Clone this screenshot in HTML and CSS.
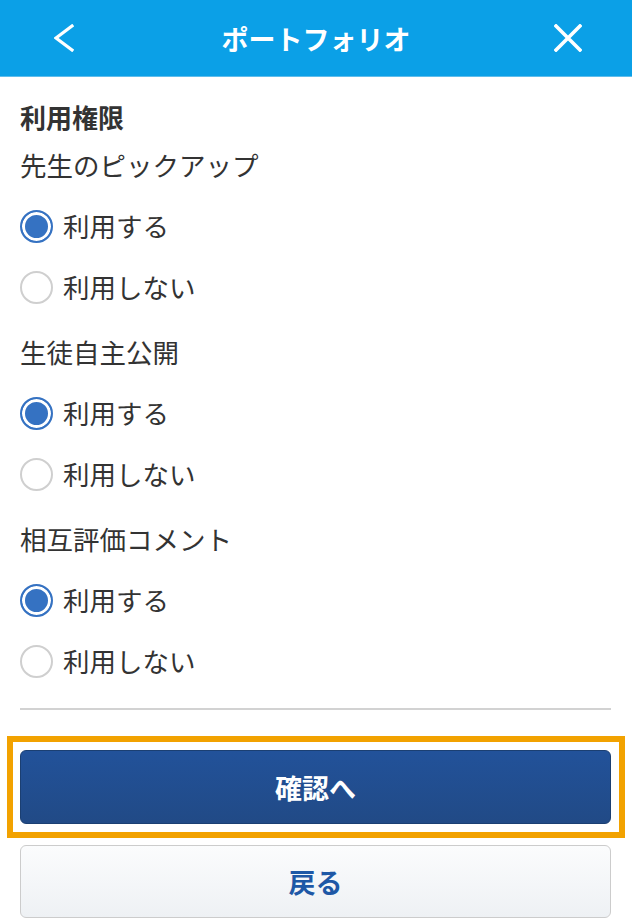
FILE: index.html
```html
<!DOCTYPE html>
<html lang="ja">
<head>
<meta charset="utf-8">
<title>ポートフォリオ</title>
<link rel="stylesheet" href="styles.css">
</head>
<body>
<header class="topbar">
  <span class="topbar-back">
    <svg width="20" height="28" viewBox="0 0 20 28"><polyline points="18,2 2,14 18,26" fill="none" stroke="#fff" stroke-width="3.2" stroke-linecap="square" stroke-linejoin="miter"/></svg>
  </span>
  <h1 class="topbar-title">ポートフォリオ</h1>
  <span class="topbar-close">
    <svg width="28" height="28" viewBox="0 0 28 28"><path d="M2 2 L26 26 M26 2 L2 26" fill="none" stroke="#fff" stroke-width="3.6" stroke-linecap="square"/></svg>
  </span>
</header>
<main class="content">
  <h2 class="section-title">利用権限</h2>

  <div class="group">
    <div class="group-label">先生のピックアップ</div>
    <label class="radio-row"><span class="radio checked"></span><span class="radio-text">利用する</span></label>
    <label class="radio-row"><span class="radio"></span><span class="radio-text">利用しない</span></label>
  </div>

  <div class="group">
    <div class="group-label">生徒自主公開</div>
    <label class="radio-row"><span class="radio checked"></span><span class="radio-text">利用する</span></label>
    <label class="radio-row"><span class="radio"></span><span class="radio-text">利用しない</span></label>
  </div>

  <div class="group">
    <div class="group-label">相互評価コメント</div>
    <label class="radio-row"><span class="radio checked"></span><span class="radio-text">利用する</span></label>
    <label class="radio-row"><span class="radio"></span><span class="radio-text">利用しない</span></label>
  </div>

  <hr class="divider">

  <div class="actions">
    <div class="highlight">
      <button class="btn btn-primary">確認へ</button>
    </div>
    <button class="btn btn-secondary">戻る</button>
  </div>
</main>
</body>
</html>
```

FILE: styles.css
```css
* { box-sizing: border-box; }
html, body {
  margin: 0;
  padding: 0;
  background: #ffffff;
}
body {
  font-family: "Noto Sans CJK JP", "Noto Sans", sans-serif;
  color: #333333;
  width: 632px;
}
.topbar {
  height: 77px;
  background: #0ba0e7;
  display: grid;
  grid-template-columns: 1fr auto 1fr;
  align-items: center;
  border-bottom: 1px solid #5fbdec;
}
.topbar-back {
  justify-self: start;
  margin-left: 54px;
  display: flex;
}
.topbar-close {
  justify-self: end;
  margin-right: 50px;
  display: flex;
}
.topbar-title {
  margin: 0;
  color: #ffffff;
  font-size: 27px;
  font-weight: 700;
  line-height: 1;
}
.content {
  padding: 16px 21px 0 20px;
}
.section-title {
  margin: 0;
  font-size: 26px;
  font-weight: 700;
  line-height: 48px;
  color: #333333;
}
.group {
  margin-bottom: 10px;
}
.group-label {
  font-size: 26.5px;
  line-height: 48px;
  margin-bottom: 7px;
  color: #333333;
}
.radio-row {
  display: flex;
  align-items: center;
  height: 61px;
  gap: 10px;
}
.radio {
  width: 33px;
  height: 33px;
  border-radius: 50%;
  border: 2px solid #cfcfcf;
  background: #ffffff;
  flex: none;
}
.radio.checked {
  border-color: #3572c2;
  background: #3572c2;
  box-shadow: inset 0 0 0 3px #ffffff;
}
.radio-text {
  font-size: 26.5px;
  line-height: 1;
  color: #333333;
}
.divider {
  margin: 16px 0 0 0;
  border: none;
  height: 2px;
  background: #d2d2d2;
}
.actions {
  display: flex;
  flex-direction: column;
  gap: 7px;
  padding-top: 26px;
}
.highlight {
  border: 6px solid #f2a200;
  padding: 8px 8px 8px 7px;
  margin: 0 -14px 0 -13px;
}
.btn {
  font-family: "Noto Sans CJK JP", "Noto Sans", sans-serif;
  font-size: 27px;
  font-weight: 700;
  width: 100%;
  border-radius: 6px;
  cursor: pointer;
  display: block;
}
.btn-primary {
  height: 74px;
  color: #ffffff;
  background: linear-gradient(#22529a, #214a86);
  border: 1px solid #1b3f72;
}
.btn-secondary {
  height: 73px;
  color: #1e58a6;
  background: linear-gradient(#fbfcfd, #eef1f4);
  border: 1px solid #cccccc;
}
```
